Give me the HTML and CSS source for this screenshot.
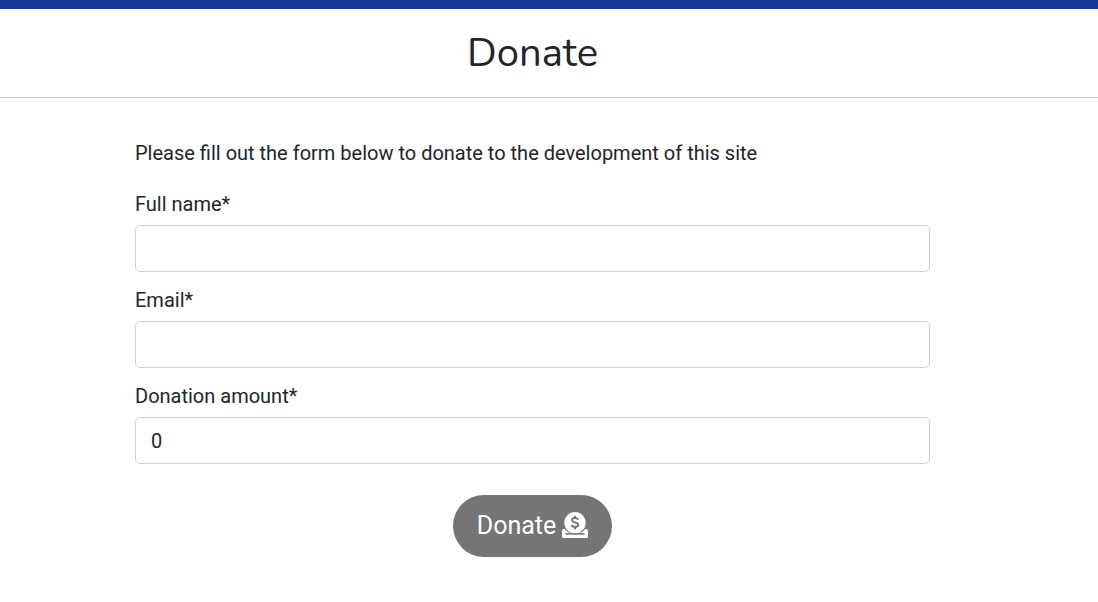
FILE: index.html
```html
<!DOCTYPE html>
<html lang="en">
<head>
  <meta charset="utf-8">
  <meta name="viewport" content="width=device-width, initial-scale=1">
  <title>Donate</title>
  <link rel="stylesheet" href="styles.css">
</head>
<body>
  <div class="top-bar"></div>
  <header class="page-header">
    <h1 class="page-title">Donate</h1>
  </header>
  <main class="page-main">
    <form class="donate-form">
      <p class="intro">Please fill out the form below to donate to the development of this site</p>
      <div class="field">
        <label class="field-label" for="full-name">Full name*</label>
        <input class="field-input" id="full-name" type="text">
      </div>
      <div class="field">
        <label class="field-label" for="email">Email*</label>
        <input class="field-input" id="email" type="email">
      </div>
      <div class="field">
        <label class="field-label" for="amount">Donation amount*</label>
        <input class="field-input" id="amount" type="text" inputmode="numeric" value="0">
      </div>
      <button class="donate-button" type="submit">
        <span>Donate</span>
        <svg class="donate-icon" viewBox="0 0 26 26" aria-hidden="true">
          <rect x="0" y="17" width="26" height="9" rx="1.500" fill="#fff"/>
          <circle cx="13" cy="10.500" r="12" fill="#757575"/>
          <path d="M4 20.500h18v1H4z" fill="#fff"/>
          <rect x="3.500" y="21.300" width="19" height="1.200" rx=".5" fill="#757575"/>
          <circle cx="13" cy="10.700" r="10.700" fill="#fff"/>
          <path d="M16.200 7.700C15.500 6.500 14.500 6 13 6c-1.800 0-3 .8-3 2.100 0 3.100 6.200 1.500 6.200 4.700 0 1.400-1.200 2.200-3.100 2.200-1.800 0-3-.7-3.600-2M13 3.700v2.300M13 15v2.300" fill="none" stroke="#757575" stroke-width="1.900"/>
          <rect x="3.500" y="21.300" width="19" height="1" rx=".5" fill="#757575"/>
        </svg>
      </button>
    </form>
  </main>
</body>
</html>
```
FILE: styles.css
```css
* {
  box-sizing: border-box;
}

body {
  margin: 0;
  background: #fff;
  color: #212529;
  font-family: Roboto, "Liberation Sans", sans-serif;
  font-size: 20px;
  line-height: 30px;
}

.top-bar {
  height: 9px;
  background: #163a9b;
}

.page-header {
  padding: 20px 33px 20px 0;
  border-bottom: 1px solid #c8c8c8;
}

.page-title {
  margin: 0;
  font-family: Nunito, Lato, sans-serif;
  font-size: 40px;
  font-weight: 400;
  line-height: 48px;
  text-align: center;
}

.page-main {
  padding: 40px 168px 40px 135px;
}

.donate-form {
  display: flex;
  flex-direction: column;
}

.intro {
  margin: 0 0 21px;
}

.field {
  display: flex;
  flex-direction: column;
  gap: 6px;
  margin-bottom: 13px;
}

.field-input {
  width: 100%;
  height: 47px;
  padding: 0 15px;
  border: 1px solid #ced0da;
  border-radius: 5px;
  background: #fff;
  color: inherit;
  font: inherit;
}

.donate-button {
  display: flex;
  align-items: center;
  align-self: center;
  gap: 6px;
  margin-top: 18px;
  padding: 12px 24px;
  border: 0;
  border-radius: 31px;
  background: #757575;
  color: #fff;
  font-family: inherit;
  font-size: 25px;
  line-height: 38px;
}

.donate-icon {
  width: 26px;
  height: 26px;
  margin-bottom: 2px;
}
```
